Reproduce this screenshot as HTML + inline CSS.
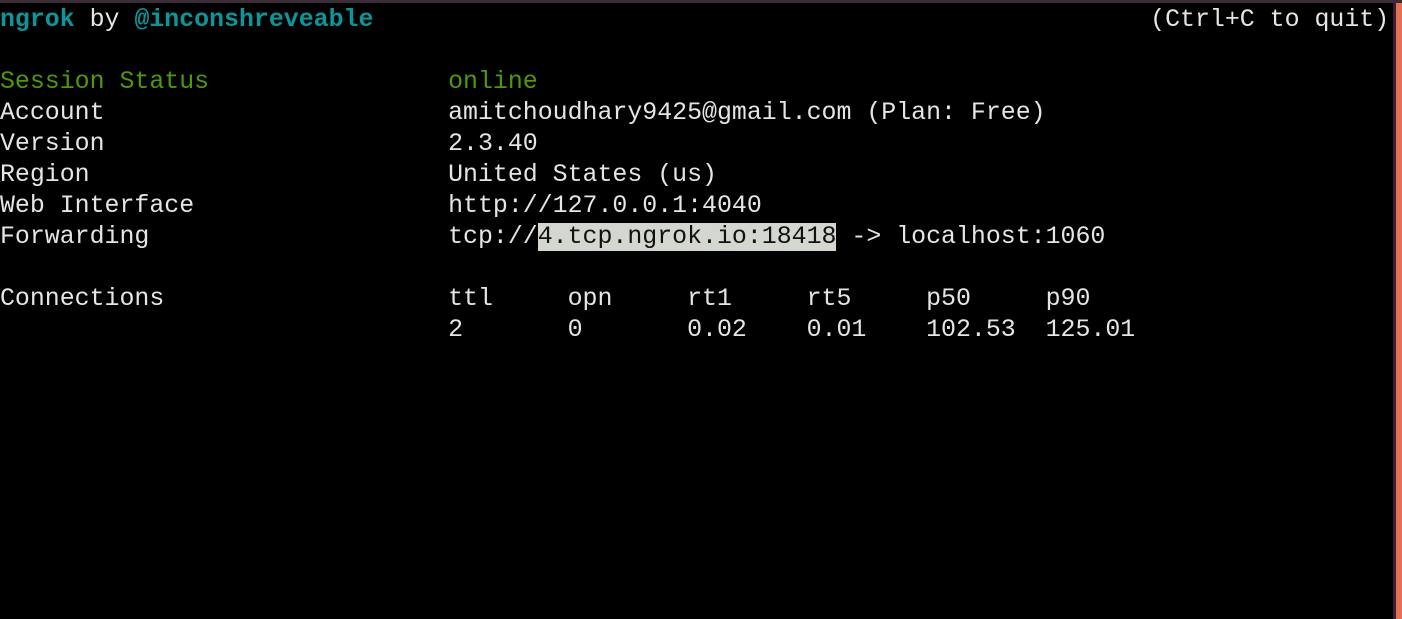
<!DOCTYPE html>
<html><head><meta charset="utf-8"><style>
html,body{margin:0;padding:0;background:#000;width:1402px;height:619px;overflow:hidden}
.top{position:absolute;left:0;top:0;width:1402px;height:3px;background:#3b2d38}
.pb{position:absolute;left:1393px;top:3px;width:3px;height:616px;background:#3e1a35}
.ob{position:absolute;left:1396px;top:3px;width:6px;height:616px;background:#e07352}
pre{position:absolute;left:0;top:5px;margin:0;font-family:"Liberation Mono",monospace;font-size:24.9px;line-height:31px;color:#e5e5e5;letter-spacing:0}
.g{color:#4e9a06}.c{color:#06989a;font-weight:bold}
.h{background:#d3d7cf;color:#111}
</style></head><body>
<div class="top"></div><div class="pb"></div><div class="ob"></div>
<pre><span class="c">ngrok</span> by <span class="c">@inconshreveable</span>                                                    (Ctrl+C to quit)

<span class="g">Session Status                </span><span class="g">online</span>
Account                       amitchoudhary9425@gmail.com (Plan: Free)
Version                       2.3.40
Region                        United States (us)
Web Interface                 http://127.0.0.1:4040
Forwarding                    tcp://<span class="h">4.tcp.ngrok.io:18418</span> -&gt; localhost:1060

Connections                   ttl     opn     rt1     rt5     p50     p90
                              2       0       0.02    0.01    102.53  125.01</pre>
</body></html>
